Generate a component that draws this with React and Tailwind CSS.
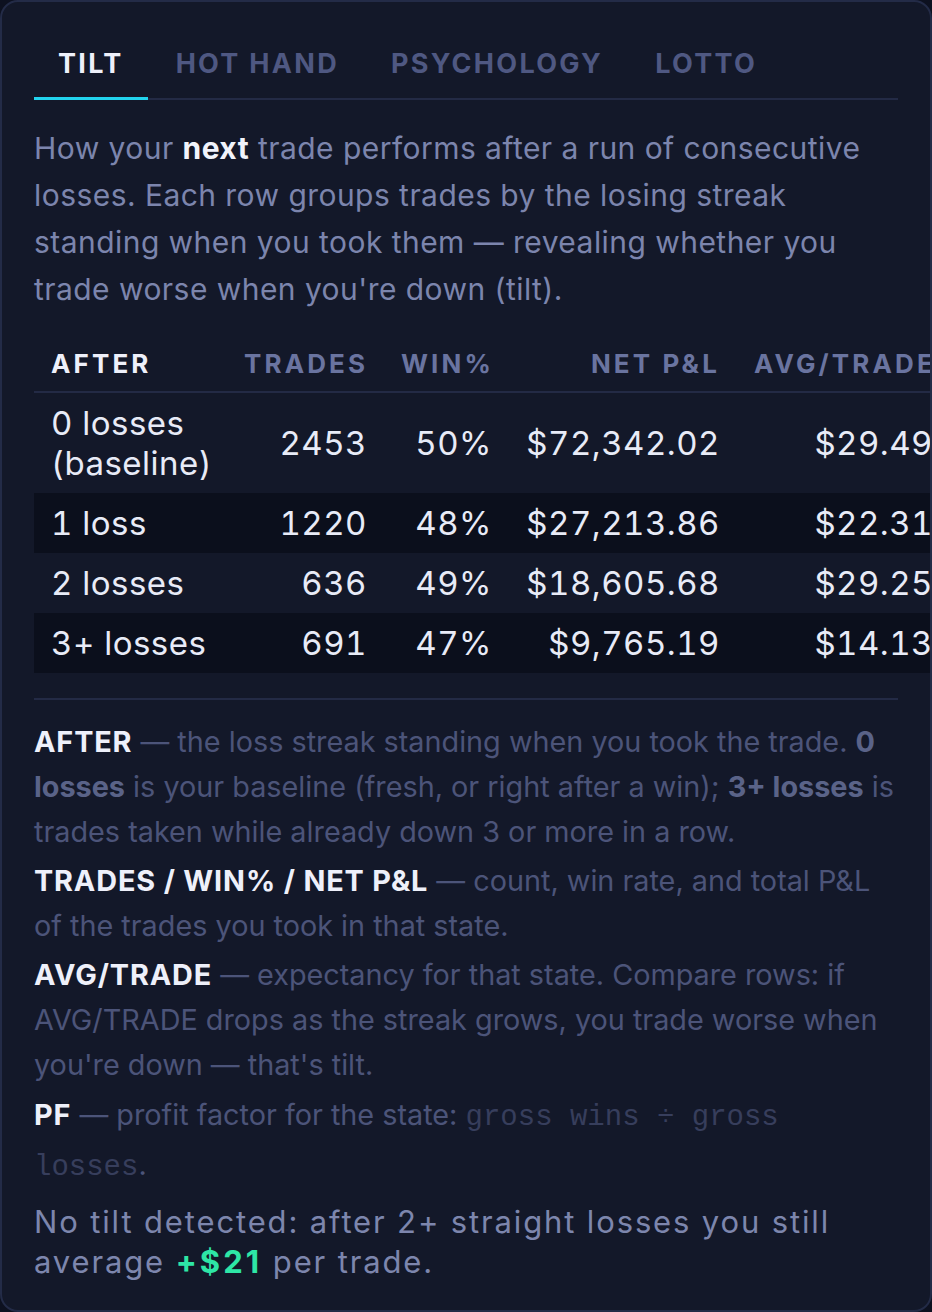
import { useState } from 'react';

const TABS = ['TILT', 'HOT HAND', 'PSYCHOLOGY', 'LOTTO'];

const ROWS = [
  { after: '0 losses (baseline)', trades: '2453', win: '50%', net: '$72,342.02', avg: '$29.49', pf: '1.42' },
  { after: '1 loss', trades: '1220', win: '48%', net: '$27,213.86', avg: '$22.31', pf: '1.31' },
  { after: '2 losses', trades: '636', win: '49%', net: '$18,605.68', avg: '$29.25', pf: '1.40' },
  { after: '3+ losses', trades: '691', win: '47%', net: '$9,765.19', avg: '$14.13', pf: '1.18' },
];

const App = () => {
  const [tab, setTab] = useState('TILT');

  return (
    <div className="min-h-screen bg-[#0d1120] font-['Inter',sans-serif]">
      <div className="w-[932px] rounded-[18px] border-2 border-[#232b47] bg-[#131829] px-[32px] pt-[26px] pb-[28px] overflow-hidden">
        {/* tabs */}
        <div className="flex gap-[4px] border-b-2 border-[#232a45]">
          {TABS.map((t) => (
            <button
              key={t}
              onClick={() => setTab(t)}
              className={`-mb-[2px] border-b-[3px] px-[24px] pt-[18px] pb-[15px] text-[27px] font-bold leading-[36px] tracking-[0.085em] ${
                tab === t ? 'border-[#22d3ee] text-[#eef0fa]' : 'border-transparent text-[#4f5882]'
              }`}
            >
              {t}
            </button>
          ))}
        </div>

        <p className="mt-[25px] text-[30px] leading-[47px] tracking-[0.015em] text-[#7c85ad]">
          How your <b className="font-bold text-[#f1f3fb]">next</b> trade performs after a run of consecutive
          losses. Each row groups trades by the losing streak standing when you took them — revealing whether you
          trade worse when you're down (tilt).
        </p>

        {/* table */}
        <div className="mt-[24px] -mr-[34px] overflow-hidden">
          <table className="table-fixed w-[1050px] border-collapse">
            <thead>
              <tr className="border-b-2 border-[#232a45] text-[26px] font-bold tracking-[0.12em] leading-[30px]">
                <th className="w-[193px] px-[17px] py-[12px] text-left text-[#eef0fa]">AFTER</th>
                <th className="w-[157px] px-[17px] py-[12px] text-right text-[#6a74a0]">TRADES</th>
                <th className="w-[125px] px-[17px] py-[12px] text-right text-[#6a74a0]">WIN%</th>
                <th className="w-[228px] px-[17px] py-[12px] text-right text-[#6a74a0]">NET P&amp;L</th>
                <th className="w-[213px] px-[17px] py-[12px] text-right text-[#6a74a0] whitespace-nowrap">AVG/TRADE</th>
                <th className="w-[134px] px-[17px] py-[12px] text-right text-[#6a74a0]">PF</th>
              </tr>
            </thead>
            <tbody className="text-[33px] leading-[40px] tracking-[0.015em] tabular-nums text-[#e8ebf7]">
              {ROWS.map((r, i) => (
                <tr key={r.after} className={i % 2 === 1 ? 'bg-[#0b0f1c]' : ''}>
                  <td className="px-[17px] py-[10px] text-left">{r.after}</td>
                  <td className="px-[17px] py-[10px] text-right">{r.trades}</td>
                  <td className="px-[17px] py-[10px] text-right">{r.win}</td>
                  <td className="px-[17px] py-[10px] text-right">{r.net}</td>
                  <td className="px-[17px] py-[10px] text-right">{r.avg}</td>
                  <td className="px-[17px] py-[10px] text-right">{r.pf}</td>
                </tr>
              ))}
            </tbody>
          </table>
        </div>

        <div className="mt-[25px] border-t-2 border-[#232a45]" />

        {/* legend */}
        <div className="mt-[19px] flex flex-col gap-[4px] text-[28.8px] leading-[45px] text-[#4c5479]">
          <p>
            <b className="font-bold tracking-[0.03em] text-[#eef0fa]">AFTER</b> — the loss streak standing when you took the trade.{' '}
            <b className="font-bold text-[#5a6388]">0 losses</b> is your baseline (fresh, or right after a win);{' '}
            <b className="font-bold text-[#5a6388]">3+ losses</b> is trades taken while already down 3 or more in a row.
          </p>
          <p>
            <b className="font-bold tracking-[0.03em] text-[#eef0fa]">TRADES / WIN% / NET P&amp;L</b> — count, win rate, and total P&amp;L
            of the trades you took in that state.
          </p>
          <p>
            <b className="font-bold tracking-[0.03em] text-[#eef0fa]">AVG/TRADE</b> — expectancy for that state. Compare rows: if
            AVG/TRADE drops as the streak grows, you trade worse when you're down — that's tilt.
          </p>
          <p className="leading-[47px]">
            <b className="font-bold tracking-[0.03em] text-[#eef0fa]">PF</b> — profit factor for the state:{' '}
            <code className="font-['Liberation_Mono',monospace] text-[29px] text-[#373e5c]">gross wins ÷ gross losses</code>.
          </p>
        </div>

        <p className="mt-[11px] text-[31px] leading-[40px] tracking-[0.06em] text-[#7d86ad]">
          No tilt detected: after 2+ straight losses you still average{' '}
          <b className="font-bold tracking-[0.1em] text-[#2ee6a6]">+$21</b> per trade.
        </p>
      </div>
    </div>
  );
};

export default App;
